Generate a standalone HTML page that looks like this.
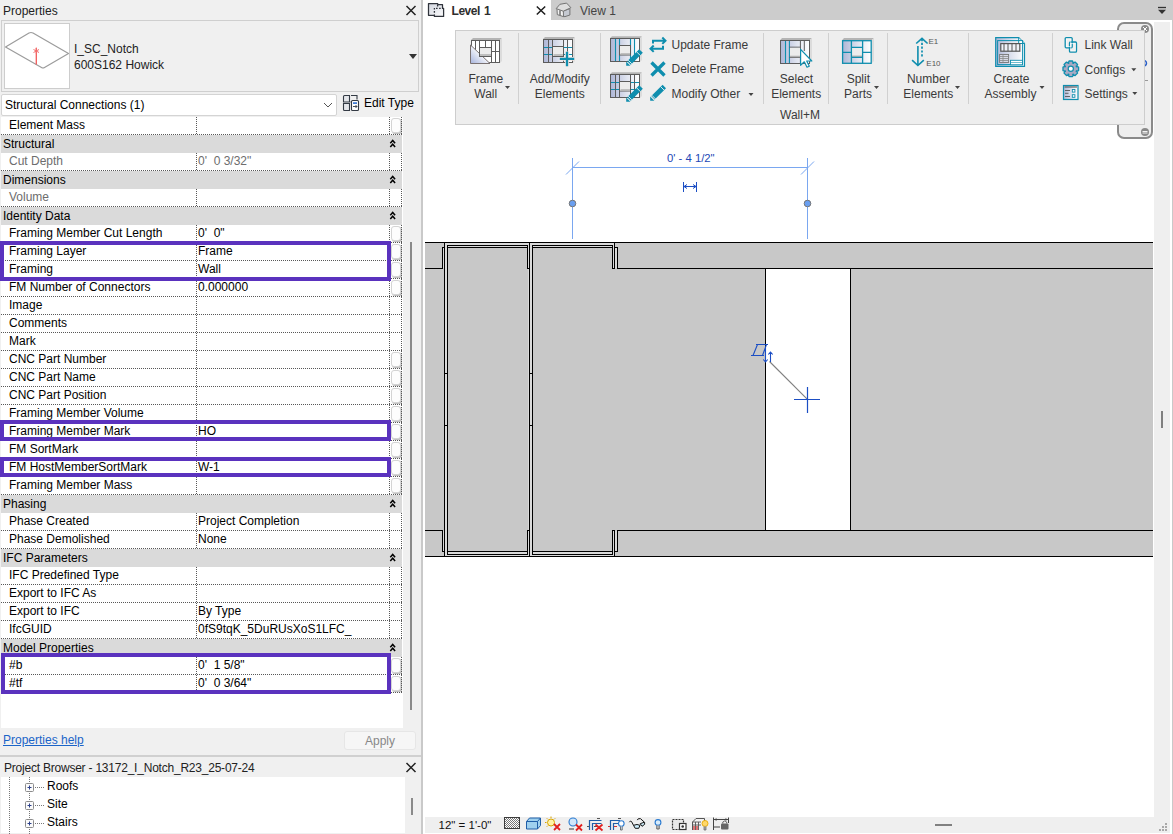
<!DOCTYPE html>
<html><head><meta charset="utf-8">
<style>
*{box-sizing:border-box;margin:0;padding:0}
html,body{width:1173px;height:834px;overflow:hidden;background:#fff;font-family:"Liberation Sans",sans-serif;font-size:12px;color:#000}
.a{position:absolute}
svg{display:block}
#left{left:0;top:0;width:421px;height:834px;background:#f0f0f0}
#sep{left:421px;top:0;width:2px;height:834px;background:#c9c9c9}
#right{left:423px;top:0;width:750px;height:834px;background:#fff;overflow:hidden}
.t{position:absolute;white-space:pre;line-height:14px}
.hdr{left:1px;width:401px;height:18px;background:#dadada}
.hd{left:1px;width:401px;height:1px;background:repeating-linear-gradient(90deg,#585858 0 1px,transparent 1px 2px)}
.vd{width:1px;height:17px;background:repeating-linear-gradient(180deg,#585858 0 1px,transparent 1px 2px)}
.btn{left:391px;width:10px;height:15px;border:1px solid #d4d4d4;border-radius:3px;background:#fdfdfd;box-shadow:1px 1px 1px #b8b8b8}
.pbox{border:4px solid #5a32be}
</style></head><body>
<div id="left" class="a">
  <div class="t" style="left:3px;top:4px;color:#222">Properties</div>
  <svg class="a" style="left:405px;top:5px" width="12" height="11" viewBox="0 0 12 11"><path d="M1.5 1L10.5 10M10.5 1L1.5 10" stroke="#222" stroke-width="1.5"/></svg>
  <div class="a" style="left:1px;top:20px;width:418px;height:72px;border:1px solid #cfcfcf;background:#f0f0f0"></div>
  <div class="a" style="left:4px;top:23px;width:66px;height:66px;border:1px solid #cdcdcd;background:#fff"></div>
  <svg class="a" style="left:0;top:0" width="72" height="92" viewBox="0 0 72 92">
    <path d="M5.5 47L29 33Q31 32 33 33L68.5 53.5L44.5 67.5Q43 68.5 41.5 67.5Z" fill="none" stroke="#9c9c9c" stroke-width="1.2" stroke-linejoin="round"/>
    <path d="M36.3 64.5V48" stroke="#f25a5a" stroke-width="1.3"/>
    <path d="M33.5 49.5L39 52.5M39 49.5L33.5 52.5M36.3 47.5V53.5" stroke="#f27070" stroke-width="1"/>
  </svg>
  <div class="t" style="left:74px;top:42px;color:#222">I_SC_Notch</div>
  <div class="t" style="left:74px;top:58px;color:#222">600S162 Howick</div>
  <svg class="a" style="left:409px;top:54px" width="8" height="5" viewBox="0 0 8 5"><path d="M0 0H8L4 5Z" fill="#333"/></svg>
  <div class="a" style="left:1px;top:94px;width:336px;height:22px;border:1px solid #d4d4d4;border-radius:2px;background:#fff"></div>
  <div class="t" style="left:5px;top:98px">Structural Connections (1)</div>
  <svg class="a" style="left:323px;top:102px" width="10" height="6" viewBox="0 0 10 6"><path d="M1 1L5 5L9 1" fill="none" stroke="#555" stroke-width="1"/></svg>
  <svg class="a" style="left:342px;top:94px" width="18" height="18" viewBox="0 0 18 18">
    <path d="M1.5 2.5Q1.5 1.5 2.5 1.5H7.5V8H1.5Z" fill="#e4e6ea" stroke="#333a44" stroke-width="1.1"/>
    <path d="M1.5 9.5H7.5V16.5H2.5Q1.5 16.5 1.5 15.5Z" fill="#e4e6ea" stroke="#333a44" stroke-width="1.1"/>
    <path d="M9 1.5H15V5.5" fill="none" stroke="#333a44" stroke-width="1.1"/>
    <path d="M8.5 8H9" stroke="#333a44"/>
    <rect x="9.5" y="6.5" width="7" height="10" rx="1" fill="#fff" stroke="#333a44" stroke-width="1.1"/>
    <rect x="11" y="8.3" width="4" height="1.6" fill="#2f6fd0"/>
    <path d="M11 12.5H15M13.5 11L15 12.5L13.5 14" fill="none" stroke="#333a44" stroke-width="0.9"/>
  </svg>
  <div class="t" style="left:364px;top:96px">Edit Type</div>
  <div id="grid" class="a" style="left:1px;top:117px;width:402px;height:611px;background:#fff"></div>
<div class="a btn" style="top:118px"></div>
<div class="a hd" style="top:134px"></div>
<div class="a vd" style="left:196px;top:117px"></div>
<div class="a vd" style="left:389px;top:117px"></div>
<div class="a vd" style="left:401px;top:117px"></div>
<div class="t" style="left:9px;top:118px;color:#000">Element Mass</div>
<div class="a hdr" style="top:135px"></div>
<div class="t" style="left:3px;top:137px">Structural</div>
<svg class="a" style="left:389px;top:138px" width="8" height="10" viewBox="0 0 8 10"><path d="M1.3 5.2L3.7 2.4L6.1 5.2M1.3 9L3.7 6.2L6.1 9" fill="none" stroke="#000" stroke-width="1.5"/></svg>
<div class="a hd" style="top:170px"></div>
<div class="a vd" style="left:196px;top:153px"></div>
<div class="a vd" style="left:389px;top:153px"></div>
<div class="a vd" style="left:401px;top:153px"></div>
<div class="t" style="left:9px;top:154px;color:#6d6d6d">Cut Depth</div>
<div class="t" style="left:198px;top:154px;color:#6d6d6d">0&#x27;  0 3/32&quot;</div>
<div class="a hdr" style="top:171px"></div>
<div class="t" style="left:3px;top:173px">Dimensions</div>
<svg class="a" style="left:389px;top:174px" width="8" height="10" viewBox="0 0 8 10"><path d="M1.3 5.2L3.7 2.4L6.1 5.2M1.3 9L3.7 6.2L6.1 9" fill="none" stroke="#000" stroke-width="1.5"/></svg>
<div class="a hd" style="top:206px"></div>
<div class="a vd" style="left:196px;top:189px"></div>
<div class="a vd" style="left:389px;top:189px"></div>
<div class="a vd" style="left:401px;top:189px"></div>
<div class="t" style="left:9px;top:190px;color:#6d6d6d">Volume</div>
<div class="a hdr" style="top:207px"></div>
<div class="t" style="left:3px;top:209px">Identity Data</div>
<svg class="a" style="left:389px;top:210px" width="8" height="10" viewBox="0 0 8 10"><path d="M1.3 5.2L3.7 2.4L6.1 5.2M1.3 9L3.7 6.2L6.1 9" fill="none" stroke="#000" stroke-width="1.5"/></svg>
<div class="a btn" style="top:226px"></div>
<div class="a hd" style="top:242px"></div>
<div class="a vd" style="left:196px;top:225px"></div>
<div class="a vd" style="left:389px;top:225px"></div>
<div class="a vd" style="left:401px;top:225px"></div>
<div class="t" style="left:9px;top:226px;color:#000">Framing Member Cut Length</div>
<div class="t" style="left:198px;top:226px;color:#000">0&#x27;  0&quot;</div>
<div class="a btn" style="top:244px"></div>
<div class="a hd" style="top:260px"></div>
<div class="a vd" style="left:196px;top:243px"></div>
<div class="a vd" style="left:389px;top:243px"></div>
<div class="a vd" style="left:401px;top:243px"></div>
<div class="t" style="left:9px;top:244px;color:#000">Framing Layer</div>
<div class="t" style="left:198px;top:244px;color:#000">Frame</div>
<div class="a btn" style="top:262px"></div>
<div class="a hd" style="top:278px"></div>
<div class="a vd" style="left:196px;top:261px"></div>
<div class="a vd" style="left:389px;top:261px"></div>
<div class="a vd" style="left:401px;top:261px"></div>
<div class="t" style="left:9px;top:262px;color:#000">Framing</div>
<div class="t" style="left:198px;top:262px;color:#000">Wall</div>
<div class="a btn" style="top:280px"></div>
<div class="a hd" style="top:296px"></div>
<div class="a vd" style="left:196px;top:279px"></div>
<div class="a vd" style="left:389px;top:279px"></div>
<div class="a vd" style="left:401px;top:279px"></div>
<div class="t" style="left:9px;top:280px;color:#000">FM Number of Connectors</div>
<div class="t" style="left:198px;top:280px;color:#000">0.000000</div>
<div class="a hd" style="top:314px"></div>
<div class="a vd" style="left:196px;top:297px"></div>
<div class="a vd" style="left:389px;top:297px"></div>
<div class="a vd" style="left:401px;top:297px"></div>
<div class="t" style="left:9px;top:298px;color:#000">Image</div>
<div class="a hd" style="top:332px"></div>
<div class="a vd" style="left:196px;top:315px"></div>
<div class="a vd" style="left:389px;top:315px"></div>
<div class="a vd" style="left:401px;top:315px"></div>
<div class="t" style="left:9px;top:316px;color:#000">Comments</div>
<div class="a hd" style="top:350px"></div>
<div class="a vd" style="left:196px;top:333px"></div>
<div class="a vd" style="left:389px;top:333px"></div>
<div class="a vd" style="left:401px;top:333px"></div>
<div class="t" style="left:9px;top:334px;color:#000">Mark</div>
<div class="a btn" style="top:352px"></div>
<div class="a hd" style="top:368px"></div>
<div class="a vd" style="left:196px;top:351px"></div>
<div class="a vd" style="left:389px;top:351px"></div>
<div class="a vd" style="left:401px;top:351px"></div>
<div class="t" style="left:9px;top:352px;color:#000">CNC Part Number</div>
<div class="a btn" style="top:370px"></div>
<div class="a hd" style="top:386px"></div>
<div class="a vd" style="left:196px;top:369px"></div>
<div class="a vd" style="left:389px;top:369px"></div>
<div class="a vd" style="left:401px;top:369px"></div>
<div class="t" style="left:9px;top:370px;color:#000">CNC Part Name</div>
<div class="a btn" style="top:388px"></div>
<div class="a hd" style="top:404px"></div>
<div class="a vd" style="left:196px;top:387px"></div>
<div class="a vd" style="left:389px;top:387px"></div>
<div class="a vd" style="left:401px;top:387px"></div>
<div class="t" style="left:9px;top:388px;color:#000">CNC Part Position</div>
<div class="a btn" style="top:406px"></div>
<div class="a hd" style="top:422px"></div>
<div class="a vd" style="left:196px;top:405px"></div>
<div class="a vd" style="left:389px;top:405px"></div>
<div class="a vd" style="left:401px;top:405px"></div>
<div class="t" style="left:9px;top:406px;color:#000">Framing Member Volume</div>
<div class="a btn" style="top:424px"></div>
<div class="a hd" style="top:440px"></div>
<div class="a vd" style="left:196px;top:423px"></div>
<div class="a vd" style="left:389px;top:423px"></div>
<div class="a vd" style="left:401px;top:423px"></div>
<div class="t" style="left:9px;top:424px;color:#000">Framing Member Mark</div>
<div class="t" style="left:198px;top:424px;color:#000">HO</div>
<div class="a btn" style="top:442px"></div>
<div class="a hd" style="top:458px"></div>
<div class="a vd" style="left:196px;top:441px"></div>
<div class="a vd" style="left:389px;top:441px"></div>
<div class="a vd" style="left:401px;top:441px"></div>
<div class="t" style="left:9px;top:442px;color:#000">FM SortMark</div>
<div class="a btn" style="top:460px"></div>
<div class="a hd" style="top:476px"></div>
<div class="a vd" style="left:196px;top:459px"></div>
<div class="a vd" style="left:389px;top:459px"></div>
<div class="a vd" style="left:401px;top:459px"></div>
<div class="t" style="left:9px;top:460px;color:#000">FM HostMemberSortMark</div>
<div class="t" style="left:198px;top:460px;color:#000">W-1</div>
<div class="a btn" style="top:478px"></div>
<div class="a hd" style="top:494px"></div>
<div class="a vd" style="left:196px;top:477px"></div>
<div class="a vd" style="left:389px;top:477px"></div>
<div class="a vd" style="left:401px;top:477px"></div>
<div class="t" style="left:9px;top:478px;color:#000">Framing Member Mass</div>
<div class="a hdr" style="top:495px"></div>
<div class="t" style="left:3px;top:497px">Phasing</div>
<svg class="a" style="left:389px;top:498px" width="8" height="10" viewBox="0 0 8 10"><path d="M1.3 5.2L3.7 2.4L6.1 5.2M1.3 9L3.7 6.2L6.1 9" fill="none" stroke="#000" stroke-width="1.5"/></svg>
<div class="a hd" style="top:530px"></div>
<div class="a vd" style="left:196px;top:513px"></div>
<div class="a vd" style="left:389px;top:513px"></div>
<div class="a vd" style="left:401px;top:513px"></div>
<div class="t" style="left:9px;top:514px;color:#000">Phase Created</div>
<div class="t" style="left:198px;top:514px;color:#000">Project Completion</div>
<div class="a hd" style="top:548px"></div>
<div class="a vd" style="left:196px;top:531px"></div>
<div class="a vd" style="left:389px;top:531px"></div>
<div class="a vd" style="left:401px;top:531px"></div>
<div class="t" style="left:9px;top:532px;color:#000">Phase Demolished</div>
<div class="t" style="left:198px;top:532px;color:#000">None</div>
<div class="a hdr" style="top:549px"></div>
<div class="t" style="left:3px;top:551px">IFC Parameters</div>
<svg class="a" style="left:389px;top:552px" width="8" height="10" viewBox="0 0 8 10"><path d="M1.3 5.2L3.7 2.4L6.1 5.2M1.3 9L3.7 6.2L6.1 9" fill="none" stroke="#000" stroke-width="1.5"/></svg>
<div class="a hd" style="top:584px"></div>
<div class="a vd" style="left:196px;top:567px"></div>
<div class="a vd" style="left:389px;top:567px"></div>
<div class="a vd" style="left:401px;top:567px"></div>
<div class="t" style="left:9px;top:568px;color:#000">IFC Predefined Type</div>
<div class="a hd" style="top:602px"></div>
<div class="a vd" style="left:196px;top:585px"></div>
<div class="a vd" style="left:389px;top:585px"></div>
<div class="a vd" style="left:401px;top:585px"></div>
<div class="t" style="left:9px;top:586px;color:#000">Export to IFC As</div>
<div class="a hd" style="top:620px"></div>
<div class="a vd" style="left:196px;top:603px"></div>
<div class="a vd" style="left:389px;top:603px"></div>
<div class="a vd" style="left:401px;top:603px"></div>
<div class="t" style="left:9px;top:604px;color:#000">Export to IFC</div>
<div class="t" style="left:198px;top:604px;color:#000">By Type</div>
<div class="a hd" style="top:638px"></div>
<div class="a vd" style="left:196px;top:621px"></div>
<div class="a vd" style="left:389px;top:621px"></div>
<div class="a vd" style="left:401px;top:621px"></div>
<div class="t" style="left:9px;top:622px;color:#000">IfcGUID</div>
<div class="t" style="left:198px;top:622px;color:#000">0fS9tqK_5DuRUsXoS1LFC_</div>
<div class="a hdr" style="top:639px"></div>
<div class="t" style="left:3px;top:641px">Model Properties</div>
<svg class="a" style="left:389px;top:642px" width="8" height="10" viewBox="0 0 8 10"><path d="M1.3 5.2L3.7 2.4L6.1 5.2M1.3 9L3.7 6.2L6.1 9" fill="none" stroke="#000" stroke-width="1.5"/></svg>
<div class="a btn" style="top:658px"></div>
<div class="a hd" style="top:674px"></div>
<div class="a vd" style="left:196px;top:657px"></div>
<div class="a vd" style="left:389px;top:657px"></div>
<div class="a vd" style="left:401px;top:657px"></div>
<div class="t" style="left:9px;top:658px;color:#000">#b</div>
<div class="t" style="left:198px;top:658px;color:#000">0&#x27;  1 5/8&quot;</div>
<div class="a btn" style="top:676px"></div>
<div class="a hd" style="top:692px"></div>
<div class="a vd" style="left:196px;top:675px"></div>
<div class="a vd" style="left:389px;top:675px"></div>
<div class="a vd" style="left:401px;top:675px"></div>
<div class="t" style="left:9px;top:676px;color:#000">#tf</div>
<div class="t" style="left:198px;top:676px;color:#000">0&#x27;  0 3/64&quot;</div>
<div class="a pbox" style="left:0px;top:241px;width:391px;height:40px"></div>
<div class="a pbox" style="left:0px;top:420px;width:391px;height:21px"></div>
<div class="a pbox" style="left:0px;top:457px;width:391px;height:20px"></div>
<div class="a pbox" style="left:1px;top:653px;width:390px;height:41px"></div>
  <div class="a" style="left:410px;top:242px;width:2px;height:468px;background:#8a8a8a"></div>
  <div class="t" style="left:3px;top:733px;color:#1a64c8;text-decoration:underline">Properties help</div>
  <div class="a" style="left:344px;top:731px;width:72px;height:19px;background:#f6f6f6;border:1px solid #e6e6e6;border-radius:3px"></div>
  <div class="t" style="left:365px;top:734px;color:#888">Apply</div>
  <div class="a" style="left:0;top:755px;width:421px;height:2px;background:#d0d0d0"></div>
  <div class="t" style="left:4px;top:761px;color:#222;letter-spacing:-0.22px">Project Browser - 13172_I_Notch_R23_25-07-24</div>
  <svg class="a" style="left:405px;top:762px" width="12" height="11" viewBox="0 0 12 11"><path d="M1.5 1L10.5 10M10.5 1L1.5 10" stroke="#222" stroke-width="1.5"/></svg>
  <div class="a" style="left:1px;top:777px;width:404px;height:56px;background:#fff"></div>
  <svg class="a" style="left:0;top:777px" width="403" height="57" viewBox="0 777 403 57">
    <path d="M9.5 777V834M29.5 777V834" stroke="#777" stroke-width="1" stroke-dasharray="1 1"/>
    <path d="M35 787.5H44M35 805.5H44M35 823.5H44" stroke="#777" stroke-width="1" stroke-dasharray="1 1"/>
    <g fill="#fbfbfb" stroke="#8c8c8c" stroke-width="1"><rect x="25.5" y="783.5" width="8" height="8" rx="1"/><rect x="25.5" y="801.5" width="8" height="8" rx="1"/><rect x="25.5" y="819.5" width="8" height="8" rx="1"/></g>
    <path d="M27.5 787.5H31.5M29.5 785.5V789.5M27.5 805.5H31.5M29.5 803.5V807.5M27.5 823.5H31.5M29.5 821.5V825.5" stroke="#2b3f8a" stroke-width="1"/>
  </svg>
  <div class="t" style="left:47px;top:779px">Roofs</div>
  <div class="t" style="left:47px;top:797px">Site</div>
  <div class="t" style="left:47px;top:815px">Stairs</div>
  <div class="a" style="left:411px;top:798px;width:2px;height:17px;background:#8a8a8a"></div>
</div>
<div id="sep" class="a"></div>
<div id="right" class="a"></div>
<!-- tab bar -->
<div class="a" style="left:423px;top:0;width:750px;height:20px;background:#cccccc"></div>
<div class="a" style="left:423px;top:0;width:128px;height:20px;background:#fff"></div>
<svg class="a" style="left:0;top:0" width="1173" height="834" viewBox="0 0 1173 834" font-family="Liberation Sans"><defs><linearGradient id="tg" x1="0" y1="0" x2="1" y2="1"><stop offset="0" stop-color="#d3d7e0"/><stop offset="1" stop-color="#fbfbfc"/></linearGradient></defs><path d="M428.5 3.6H437.7V4.6H442.5V8.4H443.6V16.4H434.4V15.3H428.5Z" fill="url(#tg)" stroke="#30343c" stroke-width="1.25" stroke-linejoin="round"/><path d="M434.4 8V14.8M437.6 5V7M436 8.4H441.6" stroke="#30343c" stroke-width="1.3" stroke-dasharray="1.6 1.5"/><text x="451.5" y="15" font-size="12" font-weight="bold" fill="#2e2e2e" letter-spacing="-0.45">Level<tspan dx="4">1</tspan></text><path d="M536.8 6.5L545.2 14.5M545.2 6.5L536.8 14.5" stroke="#1e1e1e" stroke-width="1.5"/><g transform="translate(552,0)" stroke="#737373" stroke-width="1" stroke-linejoin="round"><path d="M11.3 11L17.9 8.6V15L13 16.6H11.5Z" fill="#c5c9d1"/><path d="M5 9.2L8 5.8L11.3 11L11.5 16.6L5.3 14.6Z" fill="#f2f2f2"/><path d="M4.2 8.6L7.9 4.3L14.6 3.1L18.9 7.7L11.3 11.2Z" fill="#dedede"/><rect x="7.2" y="10.2" width="1.6" height="4.8" fill="#7a7a7a" stroke="none"/></g><text x="580" y="15" font-size="12" fill="#444">View 1</text><path d="M1158 7.5H1166" stroke="#333" stroke-width="1.3"/><path d="M1158 9.8H1166L1162 14Z" fill="#333"/></svg>
<!-- view scrollbar strip -->
<div class="a" style="left:1154px;top:22px;width:16px;height:811px;background:#efefef"></div>
<div class="a" style="left:1172px;top:20px;width:1px;height:814px;background:#c9c9c9"></div>
<div class="a" style="left:425px;top:817px;width:745px;height:16px;background:#efefef"></div>
<svg class="a" style="left:0;top:0" width="1173" height="834" viewBox="0 0 1173 834"><rect x="425" y="243" width="728" height="313" fill="#c8c8c8"/><rect x="445" y="243" width="2" height="312" fill="#dadada"/><rect x="445" y="243" width="84" height="2" fill="#dadada"/><rect x="448" y="246" width="79" height="1" fill="#dadada"/><rect x="448" y="552" width="79" height="2" fill="#dadada"/><rect x="445" y="555" width="84" height="1" fill="#dadada"/><rect x="528" y="243" width="1" height="312" fill="#dadada"/><rect x="530" y="243" width="2" height="312" fill="#dadada"/><rect x="530" y="243" width="84" height="2" fill="#dadada"/><rect x="533" y="246" width="79" height="1" fill="#dadada"/><rect x="533" y="552" width="79" height="2" fill="#dadada"/><rect x="530" y="555" width="84" height="1" fill="#dadada"/><rect x="613" y="243" width="1" height="25" fill="#dadada"/><rect x="613" y="531" width="1" height="24" fill="#dadada"/><rect x="443" y="248" width="1" height="20" fill="#dadada"/><rect x="443" y="531" width="1" height="20" fill="#dadada"/><rect x="615" y="248" width="2" height="20" fill="#dadada"/><rect x="615" y="531" width="2" height="20" fill="#dadada"/><rect x="766" y="269" width="84" height="261" fill="#fff"/><rect x="425" y="242" width="728" height="1" fill="#000"/><rect x="425" y="556" width="728" height="1" fill="#000"/><rect x="425" y="268" width="18" height="1" fill="#000"/><rect x="442" y="247" width="1" height="22" fill="#000"/><rect x="442" y="247" width="3" height="1" fill="#000"/><rect x="425" y="530" width="18" height="1" fill="#000"/><rect x="442" y="530" width="1" height="22" fill="#000"/><rect x="442" y="551" width="3" height="1" fill="#000"/><rect x="617" y="268" width="536" height="1" fill="#000"/><rect x="617" y="247" width="1" height="22" fill="#000"/><rect x="614" y="247" width="4" height="1" fill="#000"/><rect x="617" y="530" width="536" height="1" fill="#000"/><rect x="617" y="530" width="1" height="22" fill="#000"/><rect x="614" y="551" width="4" height="1" fill="#000"/><rect x="444" y="242" width="1" height="315" fill="#000"/><rect x="447" y="245" width="1" height="310" fill="#000"/><rect x="447" y="245" width="81" height="1" fill="#000"/><rect x="448" y="247" width="80" height="1" fill="#000"/><rect x="448" y="551" width="80" height="1" fill="#000"/><rect x="447" y="554" width="81" height="1" fill="#000"/><rect x="527" y="245" width="1" height="24" fill="#000"/><rect x="527" y="268" width="3" height="1" fill="#000"/><rect x="527" y="530" width="1" height="25" fill="#000"/><rect x="527" y="530" width="3" height="1" fill="#000"/><rect x="529" y="242" width="1" height="315" fill="#000"/><rect x="532" y="245" width="1" height="310" fill="#000"/><rect x="532" y="245" width="81" height="1" fill="#000"/><rect x="533" y="247" width="80" height="1" fill="#000"/><rect x="533" y="551" width="80" height="1" fill="#000"/><rect x="532" y="554" width="81" height="1" fill="#000"/><rect x="612" y="245" width="1" height="24" fill="#000"/><rect x="612" y="268" width="3" height="1" fill="#000"/><rect x="614" y="242" width="1" height="27" fill="#000"/><rect x="612" y="530" width="1" height="25" fill="#000"/><rect x="612" y="530" width="3" height="1" fill="#000"/><rect x="614" y="530" width="1" height="27" fill="#000"/><rect x="444" y="373" width="4" height="1" fill="#000"/><rect x="444" y="425" width="4" height="1" fill="#000"/><rect x="529" y="373" width="4" height="1" fill="#000"/><rect x="529" y="425" width="4" height="1" fill="#000"/><rect x="765" y="268" width="1" height="263" fill="#000"/><rect x="850" y="268" width="1" height="263" fill="#000"/><g fill="none" stroke="#7aa7f0" stroke-width="1"><path d="M572.5 158V239M807.5 158V239M572 167.5H808M566 174.5L579 161.5M801 174.5L814 161.5"/></g><circle cx="572.5" cy="203.5" r="3.3" fill="#6a9ff0" stroke="#777" stroke-width="1"/><circle cx="807.5" cy="203.5" r="3.3" fill="#6a9ff0" stroke="#777" stroke-width="1"/><text x="667" y="161.5" font-family="Liberation Sans" font-size="11.3" fill="#2247b6">0' - 4 1/2"</text><path d="M683.5 182V192M696.5 182V192M684 186.5H696M684 186.5L687 184.5M684 186.5L687 188.5M696 186.5L693 184.5M696 186.5L693 188.5" stroke="#1b4ec4" stroke-width="1" fill="none"/><path d="M769.5 361.5L807.2 399.2" stroke="#808080" stroke-width="1.1"/><path d="M794 399.5H820M807.5 387V413" stroke="#1b4ec4" stroke-width="1.2"/><path d="M757.5 344.5L753 355.5M766.5 344.5L762.5 355.5M756 344.5H768M751 355.5H764M765.5 347V362M763.3 359.5L765.5 362L767.7 359.5M770.5 352V362M768.3 354.5L770.5 352L772.7 354.5" stroke="#1b4ec4" stroke-width="1.1" fill="none"/></svg>
<svg class="a" style="left:0;top:0" width="1173" height="834" viewBox="0 0 1173 834" font-family="Liberation Sans"><defs>
<linearGradient id="gb" x1="0" y1="1" x2="0.8" y2="0.2"><stop offset="0" stop-color="#a6b3dc"/><stop offset="0.75" stop-color="#ffffff"/></linearGradient>
<linearGradient id="gh" x1="0" y1="0" x2="1" y2="0"><stop offset="0" stop-color="#aeb6d6"/><stop offset="0.55" stop-color="#dfe3ef"/><stop offset="1" stop-color="#ffffff"/></linearGradient>
<linearGradient id="gw" x1="0" y1="0" x2="0" y2="1"><stop offset="0" stop-color="#f4f4f4"/><stop offset="1" stop-color="#e4e4e4"/></linearGradient>
</defs><rect x="1118" y="23" width="34" height="115" rx="6" fill="#eeeeee" stroke="#8a8a8a" stroke-width="2"/><circle cx="1145" cy="29" r="4" fill="#8a8a8a"/><path d="M1143 27L1147 31M1147 27L1143 31" stroke="#fff" stroke-width="1"/><circle cx="1145" cy="132" r="4" fill="#8a8a8a"/><path d="M1142.5 131.5H1147.5M1142.5 133H1147.5" stroke="#fff" stroke-width="0.9"/><path d="M1145 60.5Q1148 63 1145 66" stroke="#2a5fc8" stroke-width="1.5" fill="none"/><path d="M1145 80.5H1148" stroke="#999" stroke-width="1"/><rect x="455.5" y="30.5" width="689" height="94" fill="#eeeeee" stroke="#cdcdcd" stroke-width="1"/><path d="M518.5 33V104" stroke="#d0d0d0" stroke-width="1"/><path d="M600.5 33V104" stroke="#d0d0d0" stroke-width="1"/><path d="M763.5 33V104" stroke="#d0d0d0" stroke-width="1"/><path d="M828.5 33V104" stroke="#d0d0d0" stroke-width="1"/><path d="M887.5 33V104" stroke="#d0d0d0" stroke-width="1"/><path d="M968.5 33V104" stroke="#d0d0d0" stroke-width="1"/><path d="M1052.5 33V104" stroke="#d0d0d0" stroke-width="1"/><g transform="translate(465,33)"><path d="M8 5H37L35 7H6Z" fill="#b4b4b4"/><path d="M35 7L37 5V28L35 30Z" fill="#dcdcdc"/><rect x="6.5" y="7.5" width="28" height="22" fill="#fff" stroke="#5c5c5c" stroke-width="1"/><path d="M10.5 7.5V30M14.5 7.5V30M20.5 7.5V14.5M26.5 7.5V30M30.5 7.5V30M14.5 14.5H26.5M26.5 18.5H34.5M14.5 23.5H26.5" stroke="#5c5c5c" stroke-width="1" fill="none"/><path d="M5.5 12L25 30.5H5.5Z" fill="url(#gb)" stroke="#7a7272" stroke-width="1"/><rect x="14.5" y="14.5" width="12" height="9" fill="#ececec" stroke="#5c5c5c" stroke-width="1"/><path d="M15 22H26" stroke="#b0b0b0" stroke-width="1.5"/></g><text x="485.75" y="83" font-size="12" fill="#3a3a3a" text-anchor="middle" >Frame</text><text x="485.75" y="98" font-size="12" fill="#3a3a3a" text-anchor="middle" >Wall</text><path d="M505 86H510L507.5 89Z" fill="#444"/><g transform="translate(538,33)"><path d="M7 4H37L35 6H5Z" fill="#b4b4b4"/><path d="M35 6L37 4V28L35 30Z" fill="#dcdcdc"/><rect x="5.5" y="6.5" width="29" height="23" fill="url(#gh)" stroke="#5c5c5c" stroke-width="1"/><path d="M6 14.5H14M6 21.5H14M25.5 14.5H34M25.5 21.5H34" stroke="#0f8eae" stroke-width="1.2"/><path d="M10.5 6.5V30M14.5 6.5V30M25.5 6.5V30M29.5 6.5V30M14.5 13.5H25.5M14.5 23.5H25.5" stroke="#5c5c5c" stroke-width="1" fill="none"/><rect x="15" y="14" width="10" height="9" fill="#ececec"/><path d="M15.5 22H25" stroke="#b0b0b0" stroke-width="1.5"/><path d="M21.5 25.8H36.5M29 18.5V33.5" stroke="#f4e6e2" stroke-width="3.8"/><path d="M21.8 25.8H36.2M29 18.8V33.2" stroke="#0f8eae" stroke-width="2.3"/></g><text x="559.75" y="83" font-size="12" fill="#3a3a3a" text-anchor="middle" >Add/Modify</text><text x="559.75" y="98" font-size="12" fill="#3a3a3a" text-anchor="middle" >Elements</text><g transform="translate(606,33)"><path d="M6 3.2H36L34 5.3H4Z" fill="#b4b4b4"/><path d="M34 5.3L36 3.2V27L34 29Z" fill="#dcdcdc"/><rect x="4.5" y="5.5" width="29" height="23" fill="url(#gh)" stroke="#5c5c5c" stroke-width="1"/><path d="M9.5 6V28M13.5 6V28M24.5 6V28M28.5 6V28" stroke="#0f8eae" stroke-width="1.1"/><rect x="13.5" y="12.5" width="11" height="9.5" fill="#ececec" stroke="#5c5c5c" stroke-width="1"/><path d="M14.5 21H24" stroke="#b0b0b0" stroke-width="1.5"/></g><g transform="translate(606,33)"><path d="M23 30L35 18" stroke="#0f8eae" stroke-width="5.2"/><path d="M20.2 32.8V28.6L24.4 32.8Z" fill="#0f8eae"/><path d="M22.2 27.2L25.8 30.8M30.6 18.8L34.2 22.4" stroke="#f2f2f2" stroke-width="0.9"/></g><g transform="translate(606,69)"><path d="M6 3.2H36L34 5.3H4Z" fill="#b4b4b4"/><path d="M34 5.3L36 3.2V27L34 29Z" fill="#dcdcdc"/><rect x="4.5" y="5.5" width="29" height="23" fill="url(#gh)" stroke="#5c5c5c" stroke-width="1"/><path d="M5 13.5H13M5 20.5H13M25 13.5H33M25 20.5H33" stroke="#0f8eae" stroke-width="1.1"/><path d="M9.5 6V28M13.5 6V28M24.5 6V28M28.5 6V28M13.5 12.5H24.5M13.5 22H24.5" stroke="#5c5c5c" stroke-width="1" fill="none"/><rect x="14" y="13" width="10" height="8.5" fill="#ececec"/><path d="M14.5 21H24" stroke="#b0b0b0" stroke-width="1.5"/></g><g transform="translate(606,69)"><path d="M23 30L35 18" stroke="#0f8eae" stroke-width="5.2"/><path d="M20.2 32.8V28.6L24.4 32.8Z" fill="#0f8eae"/><path d="M22.2 27.2L25.8 30.8M30.6 18.8L34.2 22.4" stroke="#f2f2f2" stroke-width="0.9"/></g><g transform="translate(646,34)" fill="none" stroke="#0f8eae" stroke-width="2"><path d="M7 9.5V6.7H19M16.3 3.5L19.5 6.7L16.3 9.9"/><path d="M17 11.8V14.7H5M7.7 11.5L4.5 14.7L7.7 17.9"/></g><path d="M651.5 62.5L664.5 75.5M664.5 62.5L651.5 75.5" stroke="#0f8eae" stroke-width="3.3"/><g transform="translate(646,34)"><path d="M7 63.8L18.3 52.5" stroke="#0f8eae" stroke-width="4.8"/><path d="M4.2 66.7V62.6L8.3 66.7Z" fill="#0f8eae"/><path d="M5.8 61.2L9.6 65M14.6 52.6L18.4 56.4" stroke="#f2f2f2" stroke-width="0.9"/></g><text x="671.5" y="49" font-size="12" fill="#3a3a3a" text-anchor="start" >Update Frame</text><text x="671.5" y="72.5" font-size="12" fill="#3a3a3a" text-anchor="start" >Delete Frame</text><text x="671.5" y="97.5" font-size="12" fill="#3a3a3a" text-anchor="start" >Modify Other</text><path d="M748.5 93H753.5L751.0 96Z" fill="#444"/><g transform="translate(776,34)"><path d="M6 4.1H36L33.6 6.2H4Z" fill="#b4b4b4"/><path d="M33.6 6.2L36 4.1V27L33.6 29.6Z" fill="#dcdcdc"/><rect x="4.5" y="6.5" width="29" height="23" fill="url(#gh)" stroke="#5c5c5c" stroke-width="1"/><path d="M9.5 7V29M13.4 7V29" stroke="#0f8eae" stroke-width="1.1"/><path d="M24.4 7V30M28.3 7V17M13.4 13.2H24.4M13.4 23.4H24.4" stroke="#5c5c5c" stroke-width="1" fill="none"/><rect x="14" y="13.8" width="10" height="9" fill="#ececec"/><path d="M14 22.5H24" stroke="#b0b0b0" stroke-width="1.5"/><path d="M24.6 15.3V31.3L28.3 27.8L31 33.2L33.3 32.2L30.7 27H35.8Z" fill="#fff" stroke="#0f8eae" stroke-width="1.2" stroke-linejoin="round"/></g><text x="796.5" y="83" font-size="12" fill="#3a3a3a" text-anchor="middle" >Select</text><text x="796.2" y="97.5" font-size="12" fill="#3a3a3a" text-anchor="middle" >Elements</text><text x="800" y="118.5" font-size="12" fill="#3a3a3a" text-anchor="middle" >Wall+M</text><g transform="translate(838,34)"><path d="M6 4.1H36L33.6 6.2H4Z" fill="#b4b4b4"/><path d="M33.6 6.2L36 4.1V27L33.6 29.6Z" fill="#dcdcdc"/><rect x="4.6" y="6.7" width="28.6" height="22.6" fill="url(#gh)" stroke="#0f8eae" stroke-width="1.3"/><rect x="14" y="14" width="10" height="9" fill="#ececec"/><path d="M14 22.3H24" stroke="#b4b4b4" stroke-width="1.5"/><path d="M13.4 6.5V29.5M24.6 6.5V29.5M4.5 18.3H13.4M24.6 18.3H33.3M13.4 13.4H24.6M13.4 23.3H24.6" stroke="#0f8eae" stroke-width="1.3" fill="none"/></g><text x="858.3" y="83" font-size="12" fill="#3a3a3a" text-anchor="middle" >Split</text><text x="858.1" y="97.5" font-size="12" fill="#3a3a3a" text-anchor="middle" >Parts</text><path d="M874 86H879L876.5 89Z" fill="#444"/><g transform="translate(905,34)" fill="none" stroke="#0f8eae" stroke-width="1.6"><path d="M11.2 9.5L17 4.3L22.6 9.5M12.9 12V31M7.1 26.1L12.9 31.5L18.8 26.1"/><path d="M17 5V24" stroke-dasharray="2.2 1.6" stroke-width="1.7"/></g><text x="928.5" y="44" font-size="8" fill="#555">E1</text><text x="926.3" y="66" font-size="8" fill="#555">E10</text><text x="928.3" y="83" font-size="12" fill="#3a3a3a" text-anchor="middle" >Number</text><text x="928.3" y="98" font-size="12" fill="#3a3a3a" text-anchor="middle" >Elements</text><path d="M955 86H960L957.5 89Z" fill="#444"/><g transform="translate(990,34)"><path d="M5.7 3.7H28.7L34.5 9.5V32.3H5.7Z" fill="url(#gh)" stroke="#0f8eae" stroke-width="1.2"/><path d="M28.7 3.7V9.5H34.5" fill="#fff" stroke="#0f8eae" stroke-width="1"/><rect x="7.6" y="6.6" width="25" height="24" fill="none" stroke="#0f8eae" stroke-width="1"/><rect x="10.8" y="9.6" width="19" height="7.6" fill="#f0f2f8" stroke="#555" stroke-width="1.2"/><path d="M14 9.6V17.2M18 9.6V17.2M22 9.6V17.2M26 9.6V17.2" stroke="#555" stroke-width="1"/><rect x="9.6" y="20.5" width="9" height="8" fill="#d8dae6" stroke="#777" stroke-width="0.9"/><path d="M10 22.5H18M10 24.5H18M10 26.5H18M13 20.5V28.5" stroke="#888" stroke-width="0.8"/><rect x="20.5" y="26.3" width="12" height="4.5" fill="#fff" stroke="#0f8eae" stroke-width="0.9"/><path d="M21 28.5H32" stroke="#0f8eae" stroke-width="0.6"/></g><text x="1011.5" y="83" font-size="12" fill="#3a3a3a" text-anchor="middle" >Create</text><text x="1010.4" y="98" font-size="12" fill="#3a3a3a" text-anchor="middle" >Assembly</text><path d="M1039.5 86H1044.5L1042.0 89Z" fill="#444"/><g fill="none" stroke="#0f8eae" stroke-width="1.3"><rect x="1065.2" y="37.6" width="7" height="10.2" rx="1"/><rect x="1069.5" y="42" width="7" height="10.2" rx="1"/></g><g fill="none" stroke="#fff" stroke-width="0.6"><rect x="1066.6" y="39" width="4.2" height="7.4"/><rect x="1070.9" y="43.4" width="4.2" height="7.4"/></g><text x="1084.5" y="49" font-size="12" fill="#3a3a3a" text-anchor="start" >Link Wall</text><path d="M1078.61 67.05L1078.61 70.55L1076.20 71.41L1076.47 70.77L1077.56 73.09L1075.09 75.56L1072.77 74.47L1073.41 74.20L1072.55 76.61L1069.05 76.61L1068.19 74.20L1068.83 74.47L1066.51 75.56L1064.04 73.09L1065.13 70.77L1065.40 71.41L1062.99 70.55L1062.99 67.05L1065.40 66.19L1065.13 66.83L1064.04 64.51L1066.51 62.04L1068.83 63.13L1068.19 63.40L1069.05 60.99L1072.55 60.99L1073.41 63.40L1072.77 63.13L1075.09 62.04L1077.56 64.51L1076.47 66.83L1076.20 66.19Z" fill="#a9a9c3" stroke="#0f8eae" stroke-width="1.3" stroke-linejoin="round"/><circle cx="1070.8" cy="68.8" r="2.6" fill="#fff" stroke="#0f8eae" stroke-width="1.2"/><text x="1084.5" y="74" font-size="12" fill="#3a3a3a" text-anchor="start" >Configs</text><path d="M1131.3 68.3H1136.3L1133.8 71.3Z" fill="#444"/><rect x="1063.5" y="85.5" width="14.5" height="14" fill="url(#gh)" stroke="#0f8eae" stroke-width="1.2"/><path d="M1064.5 87H1077" stroke="#444" stroke-width="1"/><path d="M1065 90.5H1070M1065 93.3H1068.5M1065 96.5H1070" stroke="#555" stroke-width="0.9"/><rect x="1072.3" y="89.5" width="2.6" height="2.6" fill="#fff" stroke="#0f8eae" stroke-width="0.9"/><rect x="1072.3" y="94.7" width="2.6" height="2.6" fill="#fff" stroke="#0f8eae" stroke-width="0.9"/><text x="1084.5" y="97.5" font-size="12" fill="#3a3a3a" text-anchor="start" >Settings</text><path d="M1132.3 92H1137.3L1134.8 95Z" fill="#444"/></svg>
<svg class="a" style="left:0;top:0" width="1173" height="834" viewBox="0 0 1173 834" font-family="Liberation Sans"><text x="438.5" y="829" font-size="11.5" fill="#111">12" = 1'-0"</text><defs><pattern id="chk" width="2" height="2" patternUnits="userSpaceOnUse"><rect width="1" height="1" fill="#777"/><rect x="1" y="1" width="1" height="1" fill="#777"/></pattern></defs><rect x="504.5" y="817.5" width="15" height="11" fill="#fff" stroke="#3c3c3c" stroke-width="1"/><rect x="505" y="818" width="14" height="10" fill="url(#chk)"/><path d="M526.5 821.5L529.5 818H540.5V825.5L537.5 829H526.5Z" fill="#9fd0ee" stroke="#1f5ea8" stroke-width="1"/><path d="M526.5 821.5H537.5V829M537.5 821.5L540.5 818" fill="none" stroke="#1f5ea8" stroke-width="1"/><circle cx="551" cy="822.5" r="3.5" fill="#fff3a8" stroke="#d9a400" stroke-width="1"/><path d="M551 816.5V818M545 822.5H546.5M546.8 818.3L547.8 819.3M555.2 818.3L554.2 819.3M546.8 826.7L547.8 825.7" stroke="#d9a400" stroke-width="1"/><path d="M554 824L560 830M560 824L554 830" stroke="#e02020" stroke-width="1.8"/><circle cx="573" cy="822" r="4" fill="#cfe6fb" stroke="#2a7ad0" stroke-width="1.1"/><path d="M569 829H574" stroke="#555" stroke-width="1.2"/><path d="M576 824.5L582 830.5M582 824.5L576 830.5" stroke="#e02020" stroke-width="1.8"/><path d="M589.5 830V820.5H601.5M592.5 830V823.5H601.5" fill="none" stroke="#1f5ea8" stroke-width="1.2"/><path d="M587 826.5H589M594 826.5H597" stroke="#555" stroke-width="1"/><path d="M597 818.5H600" stroke="#555" stroke-width="1"/><path d="M595.5 824.5L602.5 830.5M602.5 824.5L595.5 830.5" stroke="#e02020" stroke-width="1.8"/><path d="M610.5 830V820.5H620M613.5 830V823.5H618" fill="none" stroke="#1f5ea8" stroke-width="1.2"/><path d="M608 826.5H610M614 826.5H617" stroke="#d03030" stroke-width="1"/><path d="M618 818.5H621" stroke="#555" stroke-width="1"/><circle cx="621.3" cy="823.5" r="2.8" fill="#fff" stroke="#2a7ad0" stroke-width="1.1"/><path d="M620.5 826.5V830H622.2V826.5" fill="#cfe6fb" stroke="#555" stroke-width="0.8"/><path d="M633.5 825.3L635.2 828.3H638.7L640 825.3L637 824.5Z" fill="#cdeefc" stroke="#111" stroke-width="1"/><path d="M640.3 823.6L644.6 822.2V824.4L642 826.3L641 825Z" fill="#cdeefc" stroke="#111" stroke-width="1"/><path d="M629.4 822.2Q630.5 820.2 631.5 821.5L633.5 825.3M637.3 820.1Q637.5 818.3 640.4 818.6L644 821.8" fill="none" stroke="#111" stroke-width="1"/><path d="M658 820A2.8 2.8 0 1 1 658.01 820Z" fill="none"/><circle cx="658" cy="822.5" r="2.9" fill="#d8ecfb" stroke="#2a7ad0" stroke-width="1.1"/><path d="M656.8 825.5V829H659.2V825.5" fill="#ccc" stroke="#555" stroke-width="0.9"/><rect x="672.5" y="819.5" width="11" height="10" fill="#e8e8e8" stroke="#333" stroke-width="1.2" stroke-dasharray="2 1"/><rect x="679.5" y="823.5" width="6.5" height="6" fill="#fff" stroke="#333" stroke-width="1.2"/><circle cx="682.7" cy="826.5" r="1.3" fill="#333"/><path d="M692.5 830V822L696 818.5H704.5V824" fill="#f2f2f2" stroke="#555" stroke-width="1"/><path d="M695.5 822V830M698.5 822V830M692.5 825H701M692.5 822H701" stroke="#555" stroke-width="0.9"/><path d="M694 826V830M697 826V830" stroke="#d02020" stroke-width="1.2"/><circle cx="705" cy="823.5" r="3" fill="#ffd86b" stroke="#e6a800" stroke-width="0.9"/><path d="M704 826.5V830H706V826.5" fill="#aaa" stroke="#666" stroke-width="0.7"/><path d="M713.5 817.5V830M728.5 817.5V823M713.5 819.5H728.5M713.5 827H720" fill="none" stroke="#444" stroke-width="1" /><path d="M715 819.5L716.5 818.5M715 819.5L716.5 820.5M727 819.5L725.5 818.5M727 819.5L725.5 820.5" stroke="#444" stroke-width="0.8"/><rect x="721" y="823.5" width="7.5" height="6" rx="1" fill="#666"/><path d="M722.8 823.5V822Q724.8 819.8 726.7 822V823.5" fill="none" stroke="#666" stroke-width="1"/><rect x="935" y="824" width="17" height="2" fill="#808080"/><rect x="1165" y="823" width="2" height="2" fill="#a8a8a8"/><rect x="1162" y="826" width="2" height="2" fill="#a8a8a8"/><rect x="1165" y="826" width="2" height="2" fill="#a8a8a8"/><rect x="1159" y="829" width="2" height="2" fill="#a8a8a8"/><rect x="1162" y="829" width="2" height="2" fill="#a8a8a8"/><rect x="1165" y="829" width="2" height="2" fill="#a8a8a8"/><rect x="1161" y="411" width="2" height="17" fill="#808080"/></svg>
</body></html>
